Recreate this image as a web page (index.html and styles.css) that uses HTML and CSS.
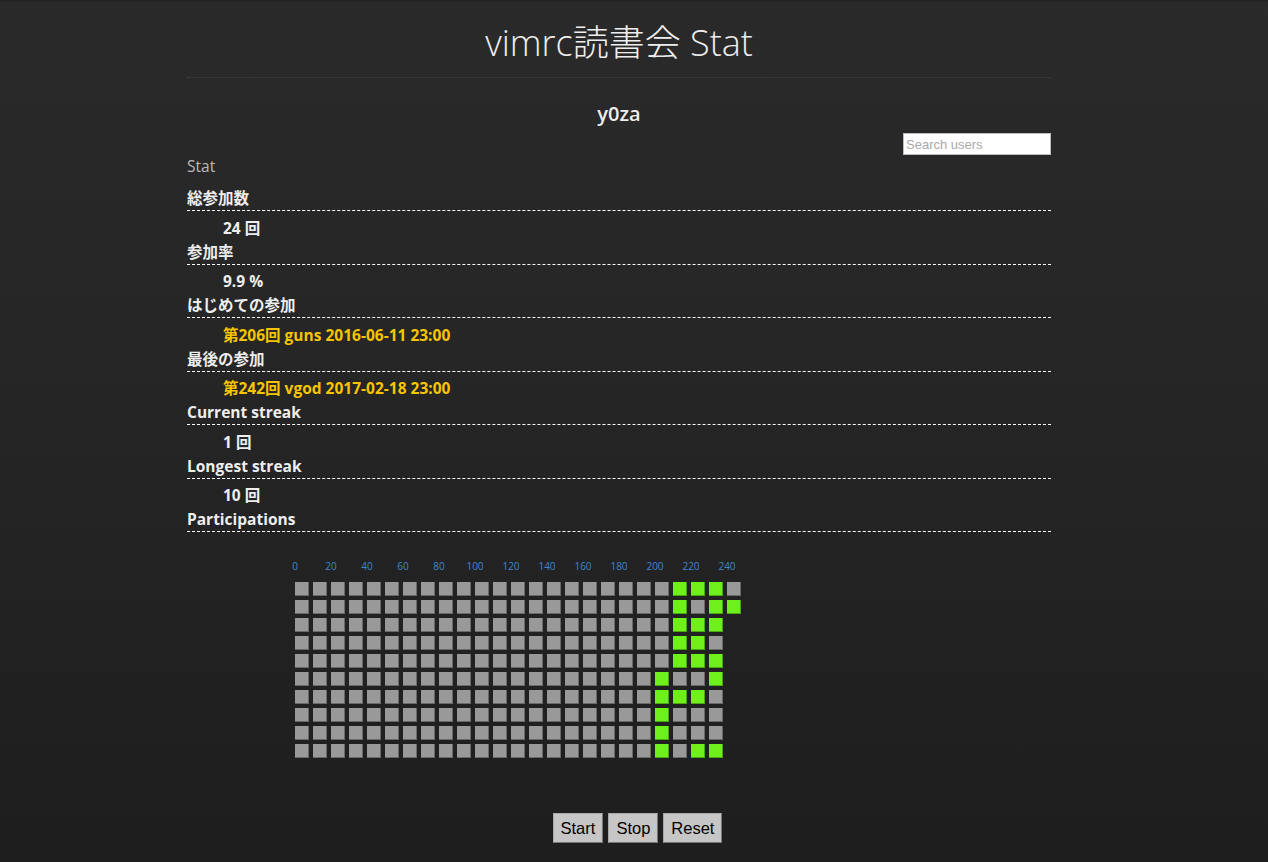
FILE: index.html
```html
<!DOCTYPE html>
<html lang="ja">
<head>
<meta charset="utf-8">
<title>vimrc読書会 Stat</title>
<link rel="stylesheet" href="styles.css">
</head>
<body>
<div class="page">
  <h1 class="title">vimrc読書会 Stat</h1>
  <h2 class="user">y0za</h2>
  <div class="search-row"><input class="search" type="text" placeholder="Search users"></div>
  <p class="stat-label">Stat</p>
  <dl class="stats">
    <dt>総参加数</dt>
    <dd>24 回</dd>
    <dt>参加率</dt>
    <dd>9.9 %</dd>
    <dt>はじめての参加</dt>
    <dd><a class="link" href="#">第206回 guns 2016-06-11 23:00</a></dd>
    <dt>最後の参加</dt>
    <dd><a class="link" href="#">第242回 vgod 2017-02-18 23:00</a></dd>
    <dt>Current streak</dt>
    <dd>1 回</dd>
    <dt>Longest streak</dt>
    <dd>10 回</dd>
    <dt>Participations</dt>
  </dl>
  <div class="chart">
    <div class="labels">
      <span>0</span><span>20</span><span>40</span><span>60</span><span>80</span><span>100</span><span>120</span><span>140</span><span>160</span><span>180</span><span>200</span><span>220</span><span>240</span>
    </div>
    <div class="grid" id="grid"></div>
  </div>
</div>
<div class="controls">
  <button class="btn" type="button">Start</button>
  <button class="btn" type="button">Stop</button>
  <button class="btn" type="button">Reset</button>
</div>
<script src="script.js"></script>
</body>
</html>
```

FILE: styles.css
```css
* { box-sizing: border-box; }

html {
  background: #1e1e1e;
}

body {
  margin: 0;
  padding: 0 30px 0 0;
  min-height: 862px;
  background: linear-gradient(#2a2a2a 0%, #262626 40%, #1e1e1e 100%);
  border-top: 2px solid #242424;
  font-family: "Open Sans", "Noto Sans CJK JP", sans-serif;
  color: #eeeeee;
}

.page {
  width: 864px;
  margin: 0 auto;
}

.title {
  margin: 0;
  padding: 16px 0 9px;
  font-size: 36px;
  font-weight: 300;
  line-height: 50px;
  text-align: center;
  color: #eeeeee;
  border-bottom: 1px dotted #444444;
}

.user {
  margin: 21px 0 0;
  font-size: 20px;
  font-weight: 600;
  line-height: 30px;
  text-align: center;
}

.search-row {
  display: flex;
  justify-content: flex-end;
  margin-top: 4px;
  height: 22px;
}

.search {
  width: 148px;
  height: 22px;
  margin: 0;
  padding: 0 2px;
  border: 1px solid #bdbdbd;
  background: #ffffff;
  font-family: "Liberation Sans", Arial, sans-serif;
  font-size: 13px;
  color: #333;
  outline: none;
}

.search::placeholder {
  color: #a9a9a9;
}

.stat-label {
  margin: 0;
  font-size: 15.5px;
  line-height: 22px;
  color: #bbbbbb;
}

.stats {
  margin: 9px 0 0;
  font-size: 15.5px;
  font-weight: 700;
}

.stats dt {
  line-height: 24px;
  border-bottom: 1px dashed #ffffff;
}

.stats dd {
  margin: 0 0 0 36px;
  padding-top: 4.5px;
  line-height: 24px;
}

.link {
  color: #f7c400;
  text-decoration: none;
}

.chart {
  margin-top: 27px;
  padding-left: 90px;
}

.labels {
  display: flex;
  height: 14px;
  font-size: 10px;
  line-height: 14px;
  color: #3f87cf;
}

.labels span {
  width: 36px;
  text-align: center;
}

.grid {
  display: grid;
  grid-template-rows: repeat(10, 14px);
  grid-auto-columns: 14px;
  grid-auto-flow: column;
  gap: 4px;
  margin: 9px 0 0 18px;
}

.cell {
  width: 14px;
  height: 14px;
  background: #999999;
  box-shadow: inset -1px -1px 0 rgba(0, 0, 0, 0.3);
}

.cell.on {
  background: #6ef01a;
}

.controls {
  display: flex;
  justify-content: center;
  gap: 5px;
  margin-top: 55px;
  padding-left: 37px;
}

.btn {
  margin: 0;
  padding: 4px 7px;
  font-family: "Liberation Sans", Arial, sans-serif;
  font-size: 16.5px;
  line-height: 20px;
  color: #000000;
  background: #c6c6c6;
  border: 1px solid;
  border-color: #a8a8a8 #777777 #777777 #a8a8a8;
  border-radius: 0;
}
```

FILE: script.js
```js
(function () {
  var grid = document.getElementById('grid');
  var total = 242;
  var attended = [205, 206, 207, 208, 209, 210, 211, 212, 213, 214, 216,
    220, 222, 223, 224, 226, 229, 230, 231, 232, 234, 235, 239, 241];
  var set = {};
  attended.forEach(function (n) { set[n] = true; });
  for (var i = 0; i < total; i++) {
    var c = document.createElement('div');
    c.className = set[i] ? 'cell on' : 'cell';
    grid.appendChild(c);
  }
})();
```
